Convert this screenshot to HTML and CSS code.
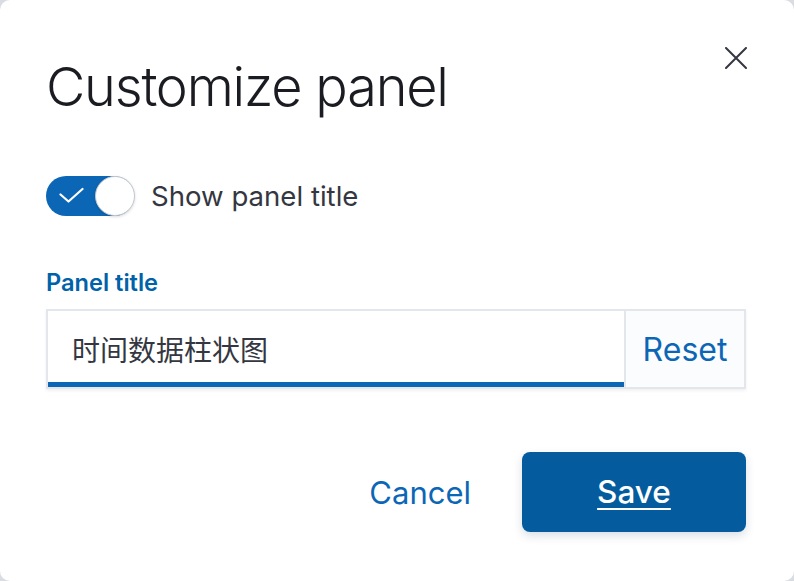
FILE: index.html
```html
<!DOCTYPE html>
<html lang="en">
<head>
<meta charset="utf-8">
<title>Customize panel</title>
<link rel="stylesheet" href="styles.css">
</head>
<body>
<div class="modal">
  <button class="close" aria-label="Close">
    <svg width="22" height="22" viewBox="0 0 22 22"><path d="M1 1 L21 21 M21 1 L1 21" stroke="#343741" stroke-width="2" stroke-linecap="round" fill="none"/></svg>
  </button>
  <h1 class="title">Customize panel</h1>
  <div class="switch-row">
    <span class="switch">
      <svg class="check" width="26" height="18" viewBox="0 0 26 18"><path d="M1.5 7.5 L9.5 14.5 L23.5 2" stroke="#fff" stroke-width="2.2" stroke-linecap="round" stroke-linejoin="round" fill="none"/></svg>
      <span class="knob"></span>
    </span>
    <span class="switch-label">Show panel title</span>
  </div>
  <div class="field">
    <label class="label">Panel title</label>
    <div class="input-group">
      <div class="input">时间数据柱状图</div>
      <div class="append">Reset</div>
    </div>
  </div>
  <div class="footer">
    <button class="btn-empty">Cancel</button>
    <button class="btn-fill">Save</button>
  </div>
</div>
</body>
</html>
```
FILE: styles.css
```css
html, body {
  margin: 0;
  padding: 0;
  background: #d9dce1;
}
body {
  font-family: Inter, "Noto Sans", sans-serif;
  color: #343741;
}
.modal {
  position: relative;
  width: 794px;
  height: 581px;
  box-sizing: border-box;
  background: #fff;
  border-radius: 10px;
  padding: 0 48px 0 46px;
  display: flex;
  flex-direction: column;
}
.close {
  position: absolute;
  top: 47px;
  left: 725px;
  width: 22px;
  height: 22px;
  padding: 0;
  border: 0;
  background: none;
  display: flex;
}
.title {
  margin: 55px 0 0 0;
  font-size: 54px;
  line-height: 64px;
  font-weight: 300;
  color: #1a1c21;
  letter-spacing: -1.2px;
}
.switch-row {
  margin-top: 57px;
  height: 40px;
  display: flex;
  align-items: center;
}
.switch {
  position: relative;
  width: 88px;
  height: 40px;
  border-radius: 20px;
  background: #0b67b6;
  display: flex;
  align-items: center;
}
.check {
  margin-left: 13px;
}
.knob {
  position: absolute;
  right: -1px;
  top: 0;
  width: 38px;
  height: 38px;
  border-radius: 50%;
  background: #fff;
  border: 1px solid #c2c8d0;
  box-shadow: 0 1px 3px rgba(0,0,0,0.15);
}
.switch-label {
  margin-left: 17px;
  font-size: 27.6px;
  line-height: 40px;
}
.field {
  margin-top: 51px;
  display: flex;
  flex-direction: column;
}
.label {
  font-size: 23.6px;
  line-height: 32px;
  font-weight: 600;
  color: #0062a9;
  margin-bottom: 10px;
}
.input-group {
  display: flex;
  height: 80px;
  box-sizing: border-box;
  border: 2px solid #e3e6ea;
  box-shadow: 0 2px 3px rgba(0,0,0,0.06);
}
.input {
  flex: 1;
  display: flex;
  align-items: center;
  padding-left: 24px;
  font-family: "Noto Sans CJK SC", sans-serif;
  font-size: 28px;
  color: #343741;
  background: #fff;
  box-shadow: inset 0 -5px 0 #0b67b6;
}
.append {
  width: 118px;
  border-left: 2px solid #e3e6ea;
  background: #fbfcfd;
  display: flex;
  align-items: center;
  justify-content: center;
  font-size: 32px;
  color: #0b67b6;
}
.footer {
  margin-top: 63px;
  display: flex;
  justify-content: flex-end;
  align-items: center;
}
.btn-empty {
  font-family: Inter, sans-serif;
  font-size: 31px;
  color: #0b67b6;
  background: none;
  border: 0;
  padding: 0 16px;
  height: 80px;
  margin-right: 35px;
}
.btn-fill {
  font-family: Inter, sans-serif;
  width: 224px;
  height: 80px;
  border: 0;
  border-radius: 8px;
  background: #045c9e;
  color: #fff;
  font-size: 31.5px;
  font-weight: 500;
  line-height: 74px;
  text-decoration: underline;
  text-underline-offset: 5px;
  text-decoration-thickness: 2px;
  box-shadow: 0 4px 10px rgba(0, 40, 90, 0.15);
}
```
